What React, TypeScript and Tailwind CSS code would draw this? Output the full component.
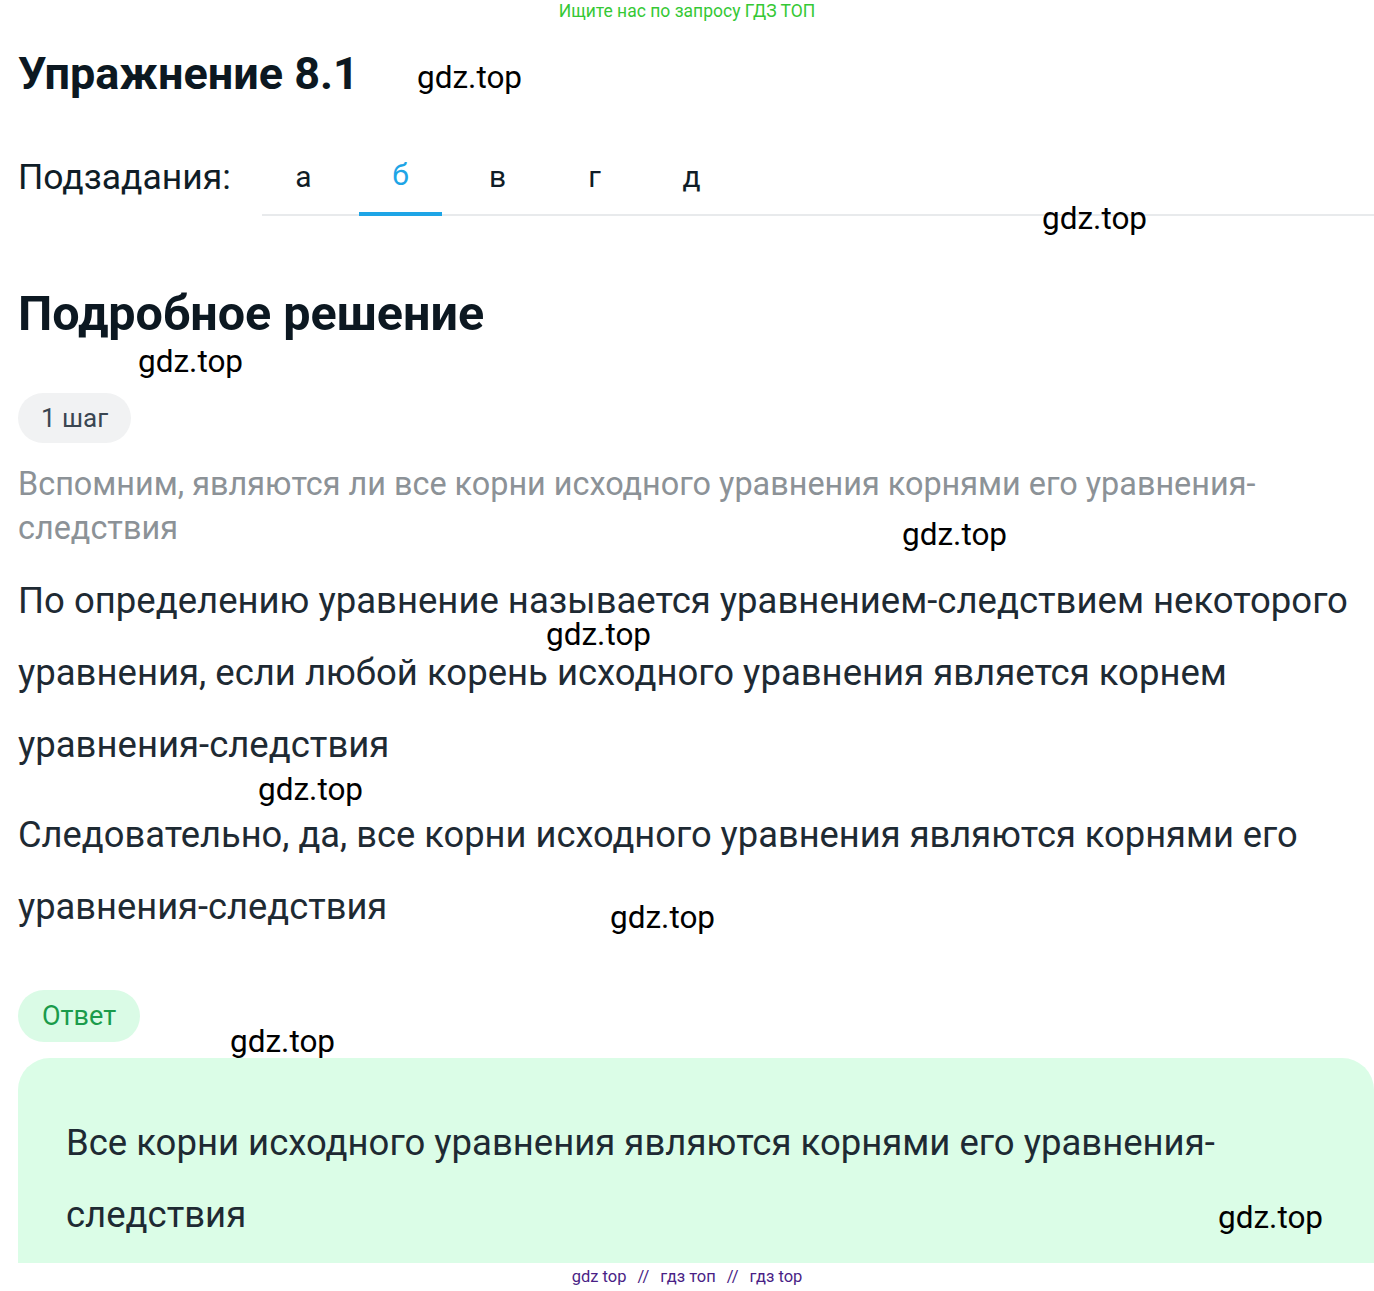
const marks: { x: number; y: number }[] = [
  { x: 417, y: 78 },
  { x: 1042, y: 219 },
  { x: 138, y: 362 },
  { x: 902, y: 535 },
  { x: 546, y: 635 },
  { x: 258, y: 790 },
  { x: 610, y: 918 },
  { x: 230, y: 1042 },
  { x: 1218, y: 1218 },
]

const tabs = ['а', 'б', 'в', 'г', 'д']

export default function App() {
  return (
    <div className="relative w-[1374px] overflow-hidden bg-white font-['Roboto','Liberation_Sans',sans-serif]">
      <div className="h-[22px] text-center text-[17.5px] leading-[22px] text-[#35c835]">
        Ищите нас по запросу ГДЗ ТОП
      </div>

      <div className="pl-[18px]">
        <h1 className="mt-[24px] h-[56px] text-[45px] font-bold leading-[56px] text-[#0c1821]">
          Упражнение 8.1
        </h1>

        <div className="mt-[38px] flex h-[76px] items-stretch">
          <div className="flex w-[244px] items-center text-[35.5px] text-[#0f1d27]">
            Подзадания:
          </div>
          <div className="flex flex-1 gap-[14px] border-b-2 border-[#e8eaec]">
            {tabs.map((t) => (
              <div
                key={t}
                className={
                  t === 'б'
                    ? 'relative -mb-[2px] flex w-[83px] items-center justify-center border-b-4 border-[#1ea5e6] pb-[4px] text-[30px] text-[#1ea5e6]'
                    : 'flex w-[83px] items-center justify-center pb-[2px] text-[30px] text-[#0f1d27]'
                }
              >
                {t}
              </div>
            ))}
          </div>
        </div>

        <h2 className="mt-[70px] h-[56px] text-[48.5px] font-bold leading-[56px] text-[#0c1821]">
          Подробное решение
        </h2>

        <div className="mt-[51px] inline-flex h-[50px] items-center rounded-full bg-[#f1f2f3] px-[23px] text-[26px] text-[#3a4651]">
          1 шаг
        </div>

        <p className="mt-[19px] text-[32.4px] leading-[44px] text-[#8c9297]">
          Вспомним, являются ли все корни исходного уравнения корнями его уравнения-следствия
        </p>

        <p className="mt-[15px] text-[36.5px] leading-[72px] text-[#1e2a33]">
          По определению уравнение называется уравнением-следствием некоторого уравнения, если любой корень исходного уравнения является корнем уравнения-следствия
        </p>

        <p className="mt-[18px] text-[36.3px] leading-[72px] text-[#1e2a33]">
          Следовательно, да, все корни исходного уравнения являются корнями его уравнения-следствия
        </p>

        <div className="mt-[47px] inline-flex h-[52px] items-center rounded-full bg-[#dafbe6] px-[24px] text-[27px] text-[#1a9b4b]">
          Ответ
        </div>

        <div className="mt-[16px] rounded-t-[32px] bg-[#dbfde7] px-[48px] pb-[12px] pt-[49px]">
          <p className="text-[36.5px] leading-[72px] text-[#1e2a33]">
            Все корни исходного уравнения являются корнями его уравнения-следствия
          </p>
        </div>
      </div>

      <div className="flex h-[28px] items-center justify-center gap-[11px] text-[16.5px] text-[#4a1f86]">
        <span>gdz top</span>
        <span>//</span>
        <span>гдз топ</span>
        <span>//</span>
        <span>гдз top</span>
      </div>

      {marks.map((m, i) => (
        <span
          key={i}
          className="absolute text-[31.5px] leading-[36px] text-black"
          style={{ left: m.x, top: m.y - 18 }}
        >
          gdz.top
        </span>
      ))}
    </div>
  )
}
